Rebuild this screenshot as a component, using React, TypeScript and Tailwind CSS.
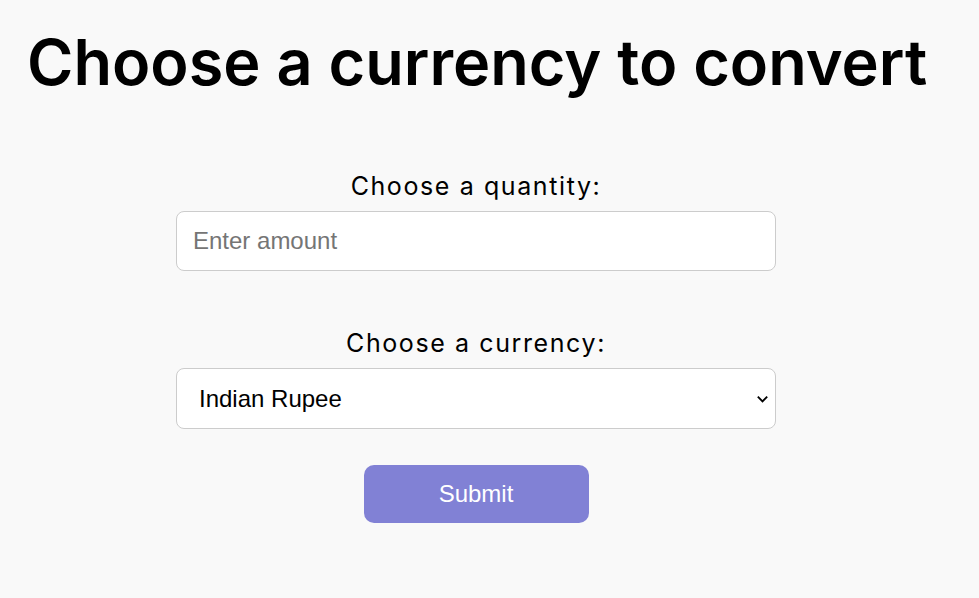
import React, { useState } from "react";

const currencies = ["Indian Rupee", "US Dollar", "Euro", "British Pound", "Japanese Yen"];

const App: React.FC = () => {
  const [amount, setAmount] = useState("");
  const [currency, setCurrency] = useState("Indian Rupee");

  return (
    <div className="min-h-[598px] bg-[#f9f9f9] pt-[22px] font-['Inter',sans-serif] text-black">
      <h1 className="ml-[27px] text-[63px] font-semibold leading-[80px]">
        Choose a currency to convert
      </h1>

      {/* Form */}
      <form
        className="ml-[176px] mt-[71px] flex w-[600px] flex-col items-center"
        onSubmit={(e) => e.preventDefault()}
      >
        <label htmlFor="amount" className="pb-[12px] text-[25px] leading-[26px] tracking-[1.6px]">
          Choose a quantity:
        </label>
        <input
          id="amount"
          type="number"
          value={amount}
          onChange={(e) => setAmount(e.target.value)}
          placeholder="Enter amount"
          className="h-[60px] w-full rounded-lg border border-[#cccccc] bg-white px-[16px] font-['Liberation_Sans',sans-serif] text-[24px] outline-none placeholder:text-[#757575]"
        />

        <label
          htmlFor="currency"
          className="mt-[59px] pb-[12px] text-[25px] leading-[26px] tracking-[1.6px]"
        >
          Choose a currency:
        </label>
        <div className="relative w-full">
          <select
            id="currency"
            value={currency}
            onChange={(e) => setCurrency(e.target.value)}
            className="h-[61px] w-full appearance-none rounded-lg border border-[#cccccc] bg-white pl-[22px] font-['Liberation_Sans',sans-serif] text-[24px] outline-none"
          >
            {currencies.map((c) => (
              <option key={c}>{c}</option>
            ))}
          </select>
          <svg
            className="pointer-events-none absolute right-[6px] top-[23px] h-[15px] w-[15px]"
            viewBox="0 0 16 16"
            fill="none"
            stroke="black"
            strokeWidth={2}
          >
            <path d="M3 6l5 5 5-5" />
          </svg>
        </div>

        <button
          type="submit"
          className="mt-[36px] h-[58px] w-[225px] rounded-[10px] bg-[#8181d5] font-['Liberation_Sans',sans-serif] text-[24px] text-white"
        >
          Submit
        </button>
      </form>
    </div>
  );
};

export default App;
